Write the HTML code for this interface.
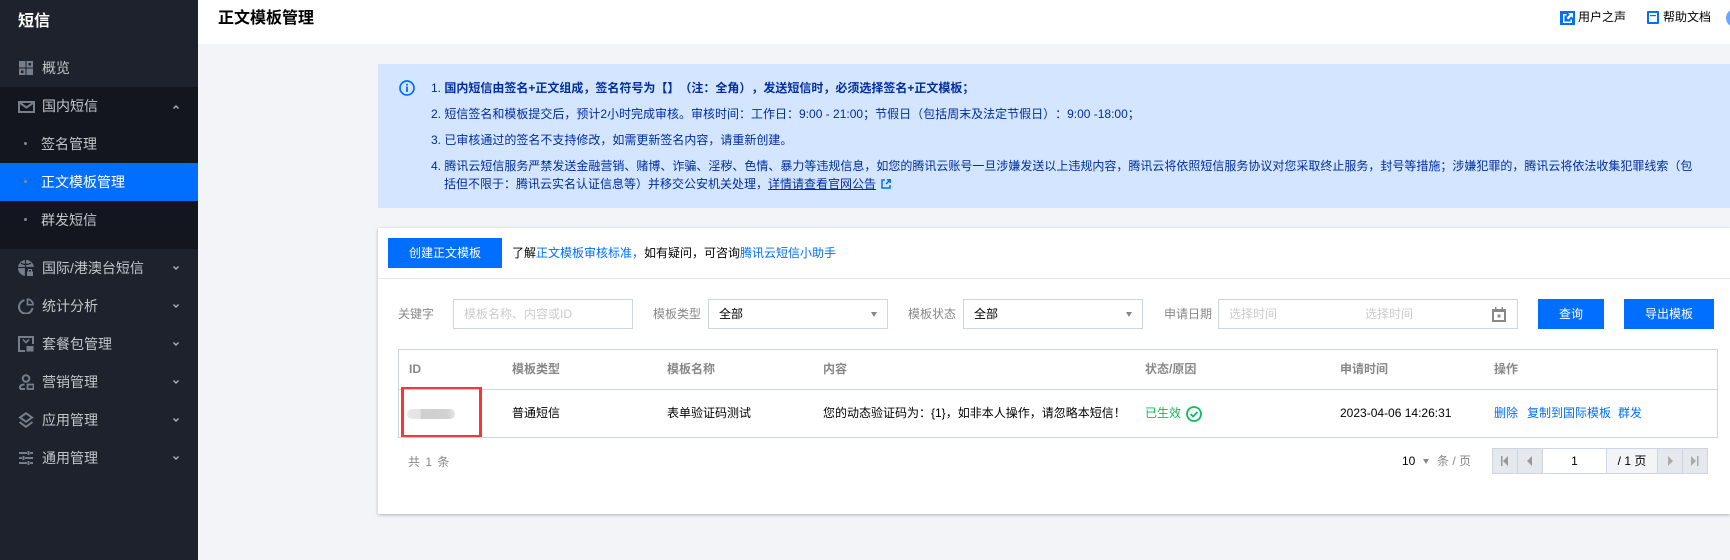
<!DOCTYPE html>
<html lang="zh"><head><meta charset="utf-8"><title>正文模板管理</title>
<style>
*{box-sizing:border-box}
html,body{margin:0;padding:0;width:1730px;height:560px;overflow:hidden;background:#f2f4f8;font:12px/18px "Liberation Sans","Noto Sans CJK SC",sans-serif;color:#000;text-spacing-trim:space-all}
.a{position:absolute;white-space:nowrap}
.side{position:absolute;left:0;top:0;width:198px;height:560px;background:#1e222d}
.dark{position:absolute;left:0;top:87px;width:198px;height:162px;background:#13161f}
.active{position:absolute;left:0;top:163px;width:198px;height:38px;background:#006eff}
.m{position:absolute;left:42px;font-size:14px;line-height:20px;color:#c1c6c8;white-space:nowrap}
.s{left:41px}
.dot{position:absolute;left:24px;width:3px;height:3px;border-radius:50%;background:#7f8a96}
.chev{position:absolute;left:173px;width:6px;height:4px}
.ic{position:absolute;left:18px;width:16px;height:16px}
.box{position:absolute;background:#fff;border:1px solid #cfd5de;height:30px}
.btn{position:absolute;background:#006eff;color:#fff;text-align:center;height:30px;line-height:30px}
.lab{color:#888}
.ph{color:#ccc}
.tri{position:absolute;width:0;height:0;border-left:3.500px solid transparent;border-right:3.500px solid transparent;border-top:5px solid #888}
.l{position:absolute;left:431px;white-space:nowrap;color:#002da0}
.b{color:#006eff}
.th{font-weight:bold;color:#888}
.pg{position:absolute;top:448px;height:26px;background:#e5e8ed;border:1px solid #cfd5de}
</style></head><body>
<div class="side"></div>
<div class="dark"></div>
<div class="active"></div>
<div class="a" style="left:18px;top:11px;font-size:16px;line-height:22px;font-weight:bold;color:#fff">短信</div>

<svg class="ic" style="top:60px" viewBox="0 0 16 16" fill="#757e8a"><path d="M1 1h6.500v6.500H1zM8.500 1H15v6.500H8.500zM1 8.500h6.500V15H1zM8.500 8.500H15V15H8.500z"/><path d="M3 10.500h2.500V13H3zM10.500 3H13v2.500h-2.500z" fill="#1e222d"/></svg>
<div class="m" style="top:58px">概览</div>

<svg class="ic" style="top:98px;width:17px" viewBox="0 0 17 16" fill="none" stroke="#757e8a" stroke-width="2"><rect x="1" y="4" width="15" height="10"/><path d="M2 5l6.500 4.500L15 5"/></svg>
<div class="m" style="top:96px">国内短信</div>
<svg class="chev" style="top:105px" viewBox="0 0 6 4" fill="none" stroke="#aab0b8" stroke-width="1.400"><path d="M.5 3.500L3 1l2.500 2.500"/></svg>

<div class="dot" style="top:142px"></div><div class="m s" style="top:134px">签名管理</div>
<div class="dot" style="top:180px"></div><div class="m s" style="top:172px;color:#fff">正文模板管理</div>
<div class="dot" style="top:218px"></div><div class="m s" style="top:210px">群发短信</div>

<svg class="ic" style="top:260px" viewBox="0 0 16 16"><circle cx="8" cy="8" r="8" fill="#757e8a"/><path d="M0 7.500h16M7.500 0v16M3 3c2.500 2 7 2 10 0" fill="none" stroke="#1e222d" stroke-width="1.200"/><rect x="7" y="8" width="9" height="8" fill="#1e222d"/><path d="M9 11.500h6V16H9z" fill="#757e8a"/><path d="M10.500 11.500v-2h3v2" fill="none" stroke="#757e8a"/></svg>
<div class="m" style="top:258px">国际/港澳台短信</div>
<svg class="chev" style="top:266px" viewBox="0 0 6 4" fill="none" stroke="#aab0b8" stroke-width="1.400"><path d="M.5.500L3 3 5.500.5"/></svg>

<svg class="ic" style="top:298px" viewBox="0 0 16 16" fill="none" stroke="#757e8a" stroke-width="2"><path d="M6.500 2.200A6.800 6.800 0 1 0 14.500 10"/><path d="M9.500 1.200v5.500H15A5.600 5.600 0 0 0 9.500 1.200z" stroke-width="1.700"/></svg>
<div class="m" style="top:296px">统计分析</div>
<svg class="chev" style="top:304px" viewBox="0 0 6 4" fill="none" stroke="#aab0b8" stroke-width="1.400"><path d="M.5.500L3 3 5.500.5"/></svg>

<svg class="ic" style="top:336px" viewBox="0 0 16 16" fill="none" stroke="#757e8a" stroke-width="2"><path d="M7 15H1V1h14v7"/><path d="M5 3.500l3 3 3-3" stroke-width="1.600"/><rect x="8.500" y="10" width="7" height="5.500" fill="#757e8a" stroke="none"/></svg>
<div class="m" style="top:334px">套餐包管理</div>
<svg class="chev" style="top:342px" viewBox="0 0 6 4" fill="none" stroke="#aab0b8" stroke-width="1.400"><path d="M.5.500L3 3 5.500.5"/></svg>

<svg class="ic" style="top:374px" viewBox="0 0 16 16" fill="none" stroke="#757e8a" stroke-width="2"><circle cx="8" cy="4.500" r="3.300"/><path d="M2 15v-1.500c0-2 1.500-3 4.500-3"/><path d="M2 15h5"/><rect x="9.500" y="10.500" width="6" height="4.500" stroke-width="1.800"/></svg>
<div class="m" style="top:372px">营销管理</div>
<svg class="chev" style="top:380px" viewBox="0 0 6 4" fill="none" stroke="#aab0b8" stroke-width="1.400"><path d="M.5.500L3 3 5.500.5"/></svg>

<svg class="ic" style="top:412px" viewBox="0 0 16 16" fill="none" stroke="#757e8a" stroke-width="2"><path d="M8 1.200l6 4.300L8 9.800 2 5.500z"/><path d="M1.500 10L8 14.800l6.500-4.800"/></svg>
<div class="m" style="top:410px">应用管理</div>
<svg class="chev" style="top:418px" viewBox="0 0 6 4" fill="none" stroke="#aab0b8" stroke-width="1.400"><path d="M.5.500L3 3 5.500.5"/></svg>

<svg class="ic" style="top:450px" viewBox="0 0 16 16" fill="none" stroke="#757e8a" stroke-width="2"><path d="M1 3h8M12 3h3M1 8h3M7 8h8M1 13h8M12 13h3M10.500 1v4M5.500 6v4M10.500 11v4"/></svg>
<div class="m" style="top:448px">通用管理</div>
<svg class="chev" style="top:456px" viewBox="0 0 6 4" fill="none" stroke="#aab0b8" stroke-width="1.400"><path d="M.5.500L3 3 5.500.5"/></svg>

<div class="a" style="left:198px;top:0;width:1532px;height:44px;background:#fff"></div>
<div class="a" style="left:218px;top:8px;font-size:16px;line-height:22px;font-weight:bold;color:#000">正文模板管理</div>
<svg class="a" style="left:1560px;top:11px" width="15" height="14" viewBox="0 0 15 14"><rect width="15" height="14" fill="#006eff"/><path d="M3 3h3.500v1.500h-2v6h6V8.500H12V12H3zM8 2h5v5l-1.700-1.600L8.200 8.500 6.500 6.800l3.200-3.200z" fill="#fff"/></svg>
<div class="a" style="left:1578px;top:8px;color:#000">用户之声</div>
<svg class="a" style="left:1647px;top:11px" width="12" height="13" viewBox="0 0 12 13"><rect width="12" height="13" fill="#006eff" rx="1"/><rect x="2" y="2" width="8" height="9" fill="#fff"/><path d="M3 4h6v1.200H3z" fill="#006eff"/></svg>
<div class="a" style="left:1663px;top:8px;color:#000">帮助文档</div>
<div class="a" style="left:1726px;top:9px;width:18px;height:18px;border-radius:50%;background:#6aa5ff"></div>

<div class="a" style="left:378px;top:64px;width:1352px;height:144px;background:#d4e6ff"></div>
<svg class="a" style="left:399px;top:80px" width="16" height="16" viewBox="0 0 16 16" fill="none"><circle cx="8" cy="8" r="7" stroke="#006eff" stroke-width="1.700"/><path d="M8 6.500V12M8 3.800v1.700" stroke="#006eff" stroke-width="1.800"/></svg>
<div class="l" style="top:79px">1. <b>国内短信由签名+正文组成，签名符号为【】（注：全角），发送短信时，必须选择签名+正文模板；</b></div>
<div class="l" style="top:105px">2. 短信签名和模板提交后，预计2小时完成审核。审核时间：工作日：9:00 - 21:00；节假日（包括周末及法定节假日）：9:00 -18:00；</div>
<div class="l" style="top:131px">3. 已审核通过的签名不支持修改，如需更新签名内容，请重新创建。</div>
<div class="l" style="top:157px">4. 腾讯云短信服务严禁发送金融营销、赌博、诈骗、淫秽、色情、暴力等违规信息，如您的腾讯云账号一旦涉嫌发送以上违规内容，腾讯云将依照短信服务协议对您采取终止服务，封号等措施；涉嫌犯罪的，腾讯云将依法收集犯罪线索（包</div>
<div class="l" style="top:175px;left:444px">括但不限于：腾讯云实名认证信息等）并移交公安机关处理，<span style="text-decoration:underline">详情请查看官网公告</span></div>
<svg class="a" style="left:881px;top:179px" width="10" height="10" viewBox="0 0 10 10" fill="none" stroke="#006eff" stroke-width="1.500"><path d="M4 1H1v8h8V6M5 5l4-4M6 .8h3.200V4"/></svg>

<div class="a" style="left:378px;top:228px;width:1352px;height:286px;background:#fff;box-shadow:0 1px 3px rgba(54,58,80,.35)"></div>
<div class="btn" style="left:388px;top:238px;width:114px">创建正文模板</div>
<div class="a" style="left:512px;top:244px">了解<span class="b">正文模板审核标准，</span>如有疑问，可咨询<span class="b">腾讯云短信小助手</span></div>
<div class="a" style="left:378px;top:278px;width:1352px;height:1px;background:#e5e8ee"></div>

<div class="a lab" style="left:398px;top:305px">关键字</div>
<div class="box" style="left:453px;top:299px;width:180px"></div>
<div class="a ph" style="left:464px;top:305px">模板名称、内容或ID</div>
<div class="a lab" style="left:653px;top:305px">模板类型</div>
<div class="box" style="left:708px;top:299px;width:180px"></div>
<div class="a" style="left:719px;top:305px">全部</div>
<div class="tri" style="left:871px;top:312px"></div>
<div class="a lab" style="left:908px;top:305px">模板状态</div>
<div class="box" style="left:963px;top:299px;width:180px"></div>
<div class="a" style="left:974px;top:305px">全部</div>
<div class="tri" style="left:1126px;top:312px"></div>
<div class="a lab" style="left:1164px;top:305px">申请日期</div>
<div class="box" style="left:1218px;top:299px;width:300px"></div>
<div class="a ph" style="left:1229px;top:305px">选择时间</div>
<div class="a ph" style="left:1365px;top:305px">选择时间</div>
<svg class="a" style="left:1492px;top:307px" width="14" height="15" viewBox="0 0 14 15"><path d="M0 2h3V0h1.500v2h5V0H11v2h3v13H0z" fill="#888"/><path d="M2 5h10v8H2z" fill="#fff"/><path d="M5.500 7.500h3V10.500h-3z" fill="#888"/></svg>
<div class="btn" style="left:1538px;top:299px;width:66px">查询</div>
<div class="btn" style="left:1624px;top:299px;width:90px">导出模板</div>

<div class="a" style="left:398px;top:349px;width:1320px;height:89px;border:1px solid #cfd5de"></div>
<div class="a" style="left:398px;top:389px;width:1320px;height:1px;background:#cfd5de"></div>
<div class="a th" style="left:409px;top:360px">ID</div>
<div class="a th" style="left:512px;top:360px">模板类型</div>
<div class="a th" style="left:667px;top:360px">模板名称</div>
<div class="a th" style="left:823px;top:360px">内容</div>
<div class="a th" style="left:1145px;top:360px">状态/原因</div>
<div class="a th" style="left:1340px;top:360px">申请时间</div>
<div class="a th" style="left:1494px;top:360px">操作</div>

<div class="a" style="left:407px;top:409px;width:48px;height:10px;border-radius:5px;background:linear-gradient(90deg,#e8e8e8 0,#e4e4e4 28%,#cfcfcf 29%,#d2d2d2 85%,#e6e6e6 100%)"></div>
<div class="a" style="left:401px;top:387px;width:81px;height:50px;border:solid #f33;border-width:2px 3px"></div>
<div class="a" style="left:512px;top:404px">普通短信</div>
<div class="a" style="left:667px;top:404px">表单验证码测试</div>
<div class="a" style="left:823px;top:404px">您的动态验证码为：{1}，如非本人操作，请忽略本短信！</div>
<div class="a" style="left:1145px;top:404px;color:#0abf5b">已生效</div>
<svg class="a" style="left:1186px;top:406px" width="16" height="16" viewBox="0 0 16 16" fill="none" stroke="#0abf5b" stroke-width="1.800"><circle cx="8" cy="8" r="7"/><path d="M4.500 8l2.500 2.500 4.500-4.500"/></svg>
<div class="a" style="left:1340px;top:404px">2023-04-06 14:26:31</div>
<div class="a b" style="left:1494px;top:404px">删除</div>
<div class="a b" style="left:1527px;top:404px">复制到国际模板</div>
<div class="a b" style="left:1618px;top:404px">群发</div>

<div class="a lab" style="left:408px;top:453px;letter-spacing:1px">共 1 条</div>
<div class="a" style="left:1402px;top:452px">10</div>
<div class="tri" style="left:1423px;top:459px"></div>
<div class="a lab" style="left:1437px;top:452px">条 / 页</div>
<div class="pg" style="left:1492px;width:26px"></div>
<div class="pg" style="left:1517px;width:26px"></div>
<div class="pg" style="left:1542px;width:65px;background:#fff;text-align:center;line-height:24px">1</div>
<div class="pg" style="left:1606px;width:52px;background:#f2f4f8;text-align:center;line-height:24px">/ 1 页</div>
<div class="pg" style="left:1657px;width:26px"></div>
<div class="pg" style="left:1682px;width:26px"></div>
<svg class="a" style="left:1501px;top:456px" width="8" height="10" viewBox="0 0 8 10" fill="#999"><path d="M0 0h1.500v10H0zM7 0v10L2 5z"/></svg>
<svg class="a" style="left:1527px;top:456px" width="6" height="10" viewBox="0 0 6 10" fill="#999"><path d="M5 0v10L0 5z"/></svg>
<svg class="a" style="left:1667px;top:456px" width="6" height="10" viewBox="0 0 6 10" fill="#aaa"><path d="M1 0v10l5-5z"/></svg>
<svg class="a" style="left:1691px;top:456px" width="8" height="10" viewBox="0 0 8 10" fill="#aaa"><path d="M0 0v10l5-5zM6 0h1.500v10H6z"/></svg>
</body></html>
